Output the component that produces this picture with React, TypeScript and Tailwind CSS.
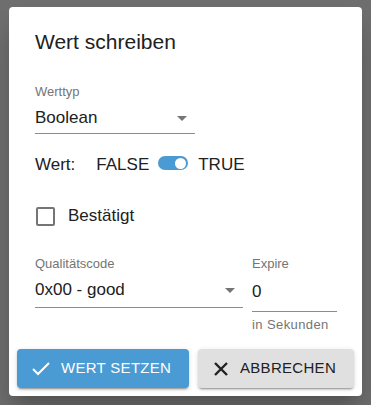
import React from "react";

function Caret() {
  return (
    <svg width="10" height="5" viewBox="0 0 10 5" className="shrink-0">
      <path d="M0 0 L10 0 L5 5 Z" fill="#757575" />
    </svg>
  );
}

function CheckIcon() {
  return (
    <svg width="24" height="24" viewBox="0 0 24 24" fill="none" stroke="#ffffff" strokeWidth="2" strokeLinecap="butt" strokeLinejoin="miter" className="shrink-0">
      <path d="M4 12 L9 17 L20 6" />
    </svg>
  );
}

function XIcon() {
  return (
    <svg width="24" height="24" viewBox="0 0 24 24" fill="none" stroke="#212121" strokeWidth="2.4" className="shrink-0">
      <path d="M6 6 L18 18 M18 6 L6 18" />
    </svg>
  );
}

export default function App() {
  return (
    <div
      className="w-[371px] h-[405px] bg-[#6f6f6f] pt-[7px] pl-[9px] overflow-hidden"
      style={{ fontFamily: '"Liberation Sans", Arial, sans-serif' }}
    >
      <div className="w-[353px] h-[389px] bg-white rounded-[4px] shadow-[0_11px_15px_-7px_rgba(0,0,0,0.2),0_24px_38px_3px_rgba(0,0,0,0.14)] flex flex-col">
        <div className="pl-[26px] pt-[23px]">
          <div className="text-[21px] leading-[24px] text-[#212121]">Wert schreiben</div>

          <div className="mt-[30px] w-[160px]">
            <div className="text-[13px] leading-[16px] text-[#757575]">Werttyp</div>
            <div className="mt-[8px] flex items-center justify-between pr-[8px] pb-[5px] border-b border-[#8c8c8c]">
              <span className="text-[17px] leading-[20px] text-[#212121]">Boolean</span>
              <Caret />
            </div>
          </div>

          <div className="mt-[21px] flex items-start text-[17px] leading-[20px] text-[#212121]">
            <span>Wert:</span>
            <span className="ml-[21px]">FALSE</span>
            <div className="ml-[9px] mt-[1px] w-[30px] h-[14px] rounded-full bg-[#4a9ad3] flex items-center justify-end pr-[2px]">
              <div className="w-[11px] h-[11px] rounded-full bg-white" />
            </div>
            <span className="ml-[10px]">TRUE</span>
          </div>

          <div className="mt-[31px] flex items-center">
            <div className="w-[19px] h-[19px] border-2 border-[#757575] rounded-[2px] ml-[1px]" />
            <span className="ml-[13px] text-[17px] leading-[20px] text-[#212121]">Bestätigt</span>
          </div>

          <div className="mt-[30px] flex gap-[9px]">
            <div className="w-[208px]">
              <div className="text-[13px] leading-[16px] text-[#757575]">Qualitätscode</div>
              <div className="mt-[8px] flex items-center justify-between pr-[8px] pb-[7px] border-b border-[#8c8c8c]">
                <span className="text-[17px] leading-[20px] text-[#212121]">0x00 - good</span>
                <Caret />
              </div>
            </div>
            <div className="w-[85px]">
              <div className="text-[13px] leading-[16px] text-[#757575]">Expire</div>
              <div className="mt-[8px] pb-[7px] border-b border-[#8c8c8c]">
                <span className="text-[17px] leading-[20px] text-[#212121]">0</span>
              </div>
              <div className="mt-[5px] text-[13px] leading-[16px] text-[#757575] tracking-[0.4px]">in Sekunden</div>
            </div>
          </div>
        </div>

        <div className="mt-auto pb-[8px] px-[8px] flex gap-[9px]">
          <button className="w-[172px] h-[39px] rounded-[4px] bg-[#4a9ad3] flex items-center pl-[12px] shadow-[0_3px_1px_-2px_rgba(0,0,0,0.2),0_2px_2px_0_rgba(0,0,0,0.14),0_1px_5px_0_rgba(0,0,0,0.12)]">
            <CheckIcon />
            <span className="ml-[8px] text-[15px] tracking-[0.3px] text-white">WERT SETZEN</span>
          </button>
          <button className="w-[156px] h-[39px] rounded-[4px] bg-[#e0e0e0] flex items-center pl-[11px] shadow-[0_3px_1px_-2px_rgba(0,0,0,0.2),0_2px_2px_0_rgba(0,0,0,0.14),0_1px_5px_0_rgba(0,0,0,0.12)]">
            <XIcon />
            <span className="ml-[7px] text-[15px] tracking-[0.3px] text-[#212121]">ABBRECHEN</span>
          </button>
        </div>
      </div>
    </div>
  );
}
